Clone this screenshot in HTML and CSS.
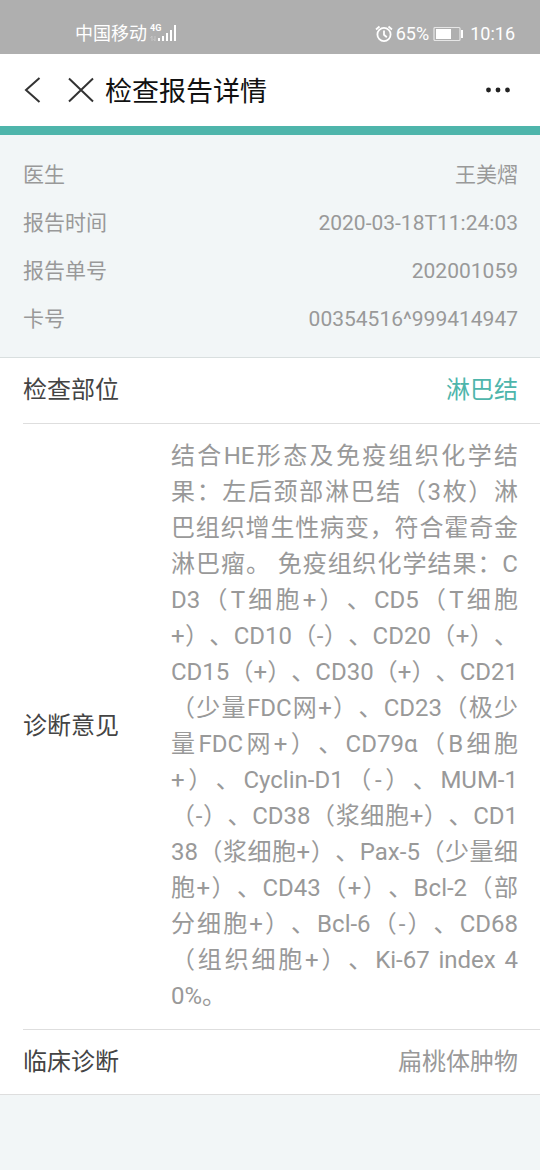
FILE: index.html
```html
<!DOCTYPE html>
<html lang="zh-CN">
<head>
<meta charset="utf-8">
<meta name="viewport" content="width=device-width, initial-scale=1">
<title>检查报告详情</title>
<link rel="stylesheet" href="styles.css">
</head>
<body>
<div class="status">
  <div class="status-group status-carrier">
    <span>中国移动</span>
    <span class="network">
      <span class="network-type">4G</span>
      <svg width="28" height="20" viewBox="0 0 28 20" aria-hidden="true">
        <g fill="#fff"><rect x="8" y="14" width="2" height="3"/><rect x="12" y="12" width="2" height="5"/><rect x="16" y="9" width="2" height="8"/><rect x="20" y="6" width="2" height="11"/><rect x="24" y="1" width="2" height="16"/></g>
        <path d="M2 12v5M.500 14l1.500-2M5 12v5M3.500 15l1.500 2" stroke="#c6c6c6" fill="none"/>
      </svg>
    </span>
  </div>
  <div class="status-group">
    <svg width="18" height="18" viewBox="0 0 18 18" fill="none" stroke="#fff" stroke-width="1.800" aria-hidden="true">
      <circle cx="9" cy="9.500" r="6.600"/>
      <path d="M9 5.500v4.300l2.800 2.400M1 4.500l3.500-3M17 4.500l-3.500-3"/>
    </svg>
    <span>65%</span>
    <svg class="battery" width="31" height="16" viewBox="0 0 31 16" aria-hidden="true">
      <rect x="1" y="1.500" width="26" height="13" rx="1" fill="none" stroke="#e6e6e6" stroke-width="1.200"/>
      <rect x="3" y="3" width="15" height="10" fill="#fff"/>
      <rect x="28" y="4" width="2" height="8" fill="#fff"/>
    </svg>
    <span>10:16</span>
  </div>
</div>

<header class="nav">
  <button class="icon-button" type="button" aria-label="返回">
    <svg width="18" height="28" viewBox="0 0 18 28"><path d="M16.500 2L3 14 16.500 26" fill="none" stroke="#333" stroke-width="2"/></svg>
  </button>
  <button class="icon-button close" type="button" aria-label="关闭">
    <svg width="26" height="26" viewBox="0 0 26 26"><path d="M1 1.500l24 23M25 1.500L1 24.500" fill="none" stroke="#333" stroke-width="2"/></svg>
  </button>
  <h1 class="nav-title">检查报告详情</h1>
  <button class="icon-button more" type="button" aria-label="更多">
    <svg width="26" height="6" viewBox="0 0 26 6" fill="#222"><circle cx="3.500" cy="3" r="2.400"/><circle cx="13" cy="3" r="2.400"/><circle cx="22.500" cy="3" r="2.400"/></svg>
  </button>
</header>

<main>
  <dl class="summary">
    <div class="summary-row"><dt>医生</dt><dd>王美熠</dd></div>
    <div class="summary-row"><dt>报告时间</dt><dd>2020-03-18T11:24:03</dd></div>
    <div class="summary-row"><dt>报告单号</dt><dd>202001059</dd></div>
    <div class="summary-row"><dt>卡号</dt><dd>00354516^999414947</dd></div>
  </dl>
  <dl class="details">
    <div class="detail-row"><dt>检查部位</dt><dd class="accent">淋巴结</dd></div>
    <div class="detail-row"><dt>诊断意见</dt><dd class="opinion">结合HE形态及免疫组织化学结果：左后颈部淋巴结（3枚）淋巴组织增生性病变，符合霍奇金淋巴瘤。 免疫组织化学结果：CD3（T细胞+）、CD5（T细胞+）、CD10（-）、CD20（+）、CD15（+）、CD30（+）、CD21（少量FDC网+）、CD23（极少量FDC网+）、CD79α（B细胞+）、Cyclin-D1（-）、MUM-1（-）、CD38（浆细胞+）、CD138（浆细胞+）、Pax-5（少量细胞+）、CD43（+）、Bcl-2（部分细胞+）、Bcl-6（-）、CD68（组织细胞+）、Ki-67 index 40%。</dd></div>
    <div class="detail-row"><dt>临床诊断</dt><dd>扁桃体肿物</dd></div>
  </dl>
</main>
</body>
</html>
```
FILE: styles.css
```css
* {
  box-sizing: border-box;
}

body {
  margin: 0;
  min-height: 100vh;
  background: #f2f6f7;
  color: #999;
  font-family: Roboto, "Noto Sans CJK SC", sans-serif;
}

dl,
dd,
h1 {
  margin: 0;
}

svg {
  display: block;
}

.status {
  display: flex;
  justify-content: space-between;
  align-items: center;
  height: 54px;
  padding: 14px 25px 0 75px;
  background: #afafaf;
  color: #fff;
  font-size: 18px;
  line-height: 24px;
}

.status-group {
  display: flex;
  align-items: center;
  gap: 3px;
}

.battery {
  margin: 0 3px 0 1px;
}

.network {
  position: relative;
}

.network-type {
  position: absolute;
  top: 0;
  left: 0;
  font-size: 9px;
  font-weight: 700;
  line-height: 9px;
}

.nav {
  display: flex;
  align-items: center;
  height: 81px;
  padding: 0 29px 0 23px;
  border-bottom: 9px solid #4eb5ab;
  background: #fff;
}

.icon-button {
  padding: 0;
  border: 0;
  background: none;
}

.close {
  margin: 0 11px 0 27px;
}

.more {
  margin-left: auto;
}

.nav-title {
  padding-top: 3px;
  color: #111;
  font-size: 27px;
  font-weight: 400;
  line-height: 36px;
}

.summary {
  padding: 16px 22px 14px 23px;
  border-bottom: 1px solid #d9dfdf;
  font-size: 21px;
  line-height: 48px;
}

.summary-row {
  display: flex;
  justify-content: space-between;
}

.details {
  padding-left: 23px;
  border-bottom: 1px solid #dedede;
  background: #fff;
  font-size: 24px;
  line-height: 36px;
}

.detail-row {
  display: flex;
  justify-content: space-between;
  align-items: center;
  padding: 14px 22px 15px 0;
}

.detail-row:last-child {
  padding-bottom: 14px;
}

.detail-row + .detail-row {
  border-top: 1px solid #dedede;
}

.detail-row dt {
  flex: none;
  width: 148px;
  color: #444;
}

.accent {
  color: #4eb5ab;
}

.opinion {
  flex: 1;
  text-align: justify;
  word-break: break-all;
  text-spacing-trim: space-all;
}
```
